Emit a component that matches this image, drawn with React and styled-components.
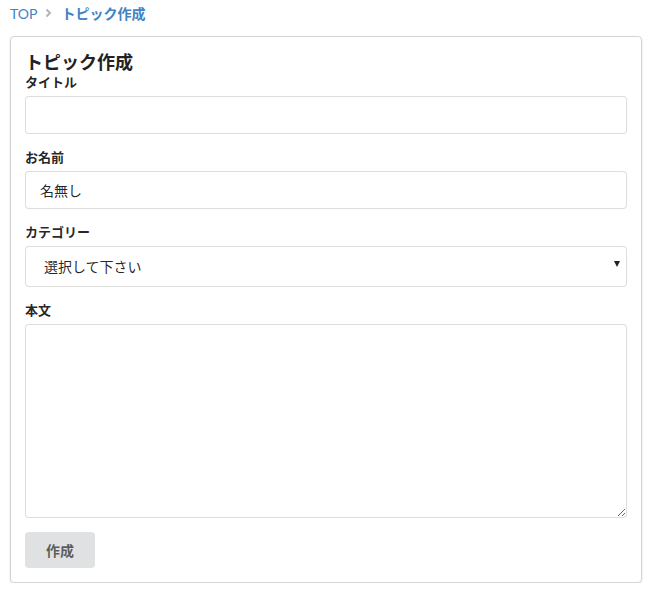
import styled, { createGlobalStyle } from 'styled-components';

const GlobalStyle = createGlobalStyle`
  body {
    margin: 0;
    background: #fff;
    font-family: Lato, "Noto Sans CJK JP", sans-serif;
    color: rgba(0, 0, 0, 0.87);
  }
`;

const Page = styled.div`
  width: 632px;
  padding: 0 10px;
`;

const Breadcrumb = styled.nav`
  display: flex;
  align-items: center;
  height: 26px;
  font-size: 14px;
`;

const Crumb = styled.a`
  color: #4183c4;
  text-decoration: none;
  font-weight: ${(p) => (p.$active ? 700 : 400)};
`;

const Divider = styled.span`
  display: flex;
  margin: 0 9px 0 8px;
  color: #b5b5b5;
`;

const Card = styled.div`
  margin-top: 10px;
  border: 1px solid #d4d4d5;
  border-radius: 4px;
  box-shadow: 0 1px 2px rgba(34, 36, 38, 0.15);
  padding: 14px 14px 14px 14px;
`;

const Title = styled.h2`
  margin: 0;
  font-size: 18px;
  line-height: 22px;
  font-weight: 700;
  color: #222;
`;

const Field = styled.div`
  display: flex;
  flex-direction: column;
  margin-bottom: ${(p) => p.$gap ?? 14}px;
`;

const Label = styled.label`
  font-size: 13px;
  line-height: 18px;
  font-weight: 700;
  margin-bottom: 5px;
  color: rgba(0, 0, 0, 0.87);
`;

const Input = styled.input`
  box-sizing: border-box;
  height: 38px;
  padding: 0 14px;
  border: 1px solid rgba(34, 36, 38, 0.15);
  border-radius: 4px;
  font-family: inherit;
  font-size: 14px;
  color: rgba(0, 0, 0, 0.87);
  outline: none;
`;

const SelectWrap = styled.div`
  position: relative;
`;

const Select = styled.select`
  box-sizing: border-box;
  width: 100%;
  height: 41px;
  padding: 0 18px;
  border: 1px solid rgba(34, 36, 38, 0.15);
  border-radius: 4px;
  background: #fff;
  font-family: inherit;
  font-size: 14px;
  color: rgba(0, 0, 0, 0.87);
  appearance: none;
  outline: none;
`;

const Arrow = styled.span`
  position: absolute;
  right: 7px;
  top: 15px;
  width: 0;
  height: 0;
  border-left: 3.5px solid transparent;
  border-right: 3.5px solid transparent;
  border-top: 6px solid #222;
  pointer-events: none;
`;

const TextArea = styled.textarea`
  box-sizing: border-box;
  height: 194px;
  padding: 10px 14px;
  border: 1px solid rgba(34, 36, 38, 0.15);
  border-radius: 4px;
  font-family: inherit;
  font-size: 14px;
  outline: none;
`;

const Button = styled.button`
  width: 70px;
  height: 36px;
  border: none;
  border-radius: 4px;
  background: #e0e1e2;
  color: rgba(0, 0, 0, 0.6);
  font-family: inherit;
  font-size: 14px;
  font-weight: 700;
  cursor: pointer;
`;

const Chevron = () => (
  <svg width="7" height="10" viewBox="0 0 7 10">
    <path d="M1.5 1.5 L5 5 L1.5 8.5" fill="none" stroke="currentColor" strokeWidth="2" />
  </svg>
);

export default function App() {
  return (
    <>
      <GlobalStyle />
      <Page>
        <Breadcrumb>
          <Crumb href="#">TOP</Crumb>
          <Divider>
            <Chevron />
          </Divider>
          <Crumb $active>トピック作成</Crumb>
        </Breadcrumb>
        <Card>
          <Title>トピック作成</Title>
          <Field>
            <Label>タイトル</Label>
            <Input type="text" />
          </Field>
          <Field>
            <Label>お名前</Label>
            <Input type="text" defaultValue="名無し" />
          </Field>
          <Field>
            <Label>カテゴリー</Label>
            <SelectWrap>
              <Select defaultValue="">
                <option value="">選択して下さい</option>
              </Select>
              <Arrow />
            </SelectWrap>
          </Field>
          <Field>
            <Label>本文</Label>
            <TextArea />
          </Field>
          <Button>作成</Button>
        </Card>
      </Page>
    </>
  );
}
